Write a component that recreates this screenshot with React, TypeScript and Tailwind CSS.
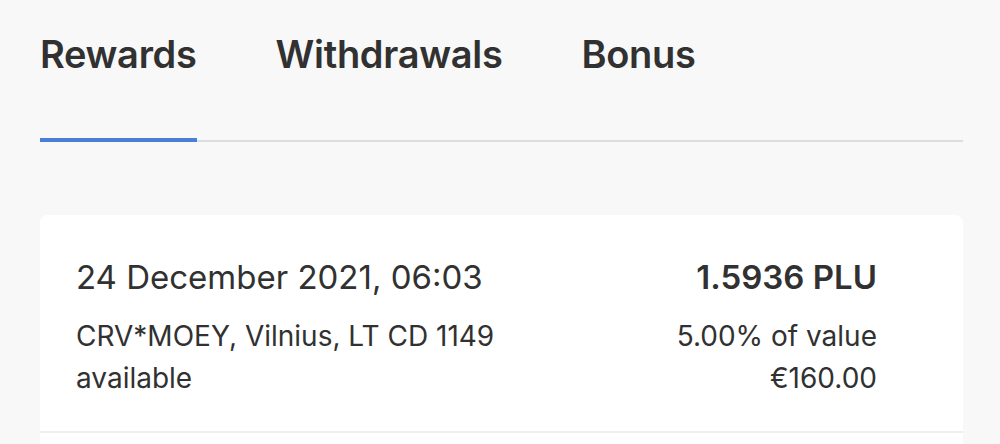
import React from 'react'

const tabs = ['Rewards', 'Withdrawals', 'Bonus']

export default function App() {
  return (
    <div
      className="w-[1000px] h-[444px] overflow-hidden bg-[#f8f8f8] text-[#313131]"
      style={{ fontFamily: 'Inter, "Noto Sans", sans-serif' }}
    >
      <div className="pl-10 pr-[37px] pt-[30px]">
        <div className="flex gap-[79px] text-[38px] font-semibold leading-[48px] tracking-[-0.3px]">
          {tabs.map((t) => (
            <div key={t}>{t}</div>
          ))}
        </div>
        <div className="mt-[60px] flex items-end">
          <div className="w-[157px] h-[4px] bg-[#4b7fd6]" />
          <div className="flex-1 h-[2px] bg-[#dcdde0]" />
        </div>

        <div className="mt-[73px] rounded-t-[8px] bg-white">
          <div className="flex justify-between pl-9 pr-[86px] pt-[41px] pb-[32px] border-b-2 border-[#eeeeee]">
            <div>
              <div className="text-[33px] leading-[42px]">24 December 2021, 06:03</div>
              <div className="mt-[17px] text-[28px] leading-[42px]">
                CRV*MOEY, Vilnius, LT CD 1149
                <br />
                available
              </div>
            </div>
            <div className="text-right">
              <div className="text-[33px] leading-[42px] font-semibold">1.5936 PLU</div>
              <div className="mt-[17px] text-[28px] leading-[42px]">
                5.00% of value
                <br />
                €160.00
              </div>
            </div>
          </div>
          <div className="h-[20px]" />
        </div>
      </div>
    </div>
  )
}
